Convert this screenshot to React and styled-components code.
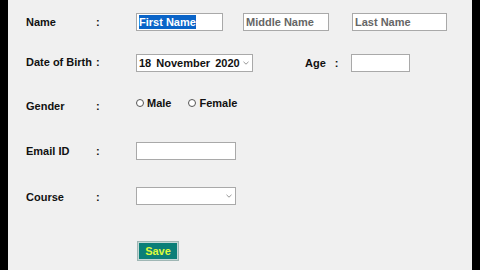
import React from "react";
import styled, { createGlobalStyle } from "styled-components";

const GlobalStyle = createGlobalStyle`
  html, body {
    margin: 0;
    padding: 0;
    background: #000;
  }
  body {
    font-family: "Liberation Sans", Arial, sans-serif;
  }
`;

const Screen = styled.div`
  width: 480px;
  height: 270px;
  background: #000;
  display: flex;
  justify-content: center;
  overflow: hidden;
`;

const Panel = styled.div`
  width: 464px;
  height: 270px;
  background: #f0f0f0;
  box-sizing: border-box;
  padding: 13px 0 0 18px;
  display: flex;
  flex-direction: column;
`;

const Row = styled.div`
  display: grid;
  grid-template-columns: 70px 40px 1fr;
  align-items: center;
  height: ${(p) => p.$h || 18}px;
  margin-top: ${(p) => p.$top || 0}px;
`;

const Label = styled.span`
  font-size: 11px;
  font-weight: bold;
  color: #111;
  white-space: nowrap;
  transform: translateY(${(p) => p.$dy || 0}px);
`;

const Fields = styled.div`
  display: flex;
  align-items: center;
  height: 100%;
  transform: translateY(${(p) => p.$dy || 0}px);
`;

const TextBox = styled.div`
  box-sizing: border-box;
  width: ${(p) => p.$w}px;
  height: 18px;
  margin-left: ${(p) => p.$ml || 0}px;
  background: #fff;
  border: 1px solid #a9a9a9;
  display: flex;
  align-items: center;
  padding-left: 2px;
  font-size: 11px;
  font-weight: bold;
  color: #666;
  white-space: nowrap;
`;

const Selected = styled.span`
  background: #0a64c8;
  color: #fff;
  line-height: 14px;
`;

const SelectBox = styled(TextBox)`
  justify-content: space-between;
  padding: 0 3px 0 2px;
  color: #111;
  word-spacing: 2px;
`;

const Chevron = () => (
  <svg width="6" height="4" viewBox="0 0 6 4">
    <path d="M0.5 0.8 L3 3.2 L5.5 0.8" fill="none" stroke="#8a8a8a" strokeWidth="0.9" />
  </svg>
);

const InlineLabel = styled(Label)`
  margin-left: ${(p) => p.$ml || 0}px;
`;

const Radio = styled.label`
  display: flex;
  align-items: center;
  gap: 3px;
  margin-left: ${(p) => p.$ml || 0}px;
  font-size: 11px;
  font-weight: bold;
  color: #111;
`;

const Dot = styled.span`
  box-sizing: border-box;
  width: 8px;
  height: 8px;
  border: 1px solid #555;
  border-radius: 50%;
  background: #fff;
`;

const SaveButton = styled.button`
  box-sizing: border-box;
  width: 42px;
  height: 20px;
  margin: 0 0 0 1px;
  padding: 0;
  background: #0b7f78;
  border: 2px solid #c4d8d6;
  outline: 1px solid #9fb6b4;
  outline-offset: -1px;
  color: #dcfa3c;
  font-family: "Liberation Sans", Arial, sans-serif;
  font-size: 11px;
  font-weight: bold;
`;

export default function App() {
  return (
    <>
      <GlobalStyle />
      <Screen>
        <Panel>
          <Row>
            <Label>Name</Label>
            <Label>:</Label>
            <Fields>
              <TextBox $w={87}>
                <Selected>First Name</Selected>
              </TextBox>
              <TextBox $w={86} $ml={20}>Middle Name</TextBox>
              <TextBox $w={95} $ml={23}>Last Name</TextBox>
            </Fields>
          </Row>

          <Row $top={22}>
            <Label $dy={-1}>Date of Birth</Label>
            <Label $dy={-1}>:</Label>
            <Fields>
              <SelectBox $w={117}>
                <span>18 November 2020</span>
                <Chevron />
              </SelectBox>
              <InlineLabel $ml={52}>Age</InlineLabel>
              <InlineLabel $ml={9}>:</InlineLabel>
              <TextBox $w={59} $ml={13} style={{ marginTop: 1 }} />
            </Fields>
          </Row>

          <Row $top={26}>
            <Label>Gender</Label>
            <Label>:</Label>
            <Fields $dy={-3}>
              <Radio>
                <Dot />
                Male
              </Radio>
              <Radio $ml={17}>
                <Dot />
                Female
              </Radio>
            </Fields>
          </Row>

          <Row $top={27}>
            <Label>Email ID</Label>
            <Label>:</Label>
            <Fields>
              <TextBox $w={100} />
            </Fields>
          </Row>

          <Row $top={27}>
            <Label $dy={1}>Course</Label>
            <Label $dy={1}>:</Label>
            <Fields>
              <SelectBox $w={100}>
                <span />
                <Chevron />
              </SelectBox>
            </Fields>
          </Row>

          <Row $top={36} $h={20}>
            <span />
            <span />
            <Fields>
              <SaveButton>Save</SaveButton>
            </Fields>
          </Row>
        </Panel>
      </Screen>
    </>
  );
}
